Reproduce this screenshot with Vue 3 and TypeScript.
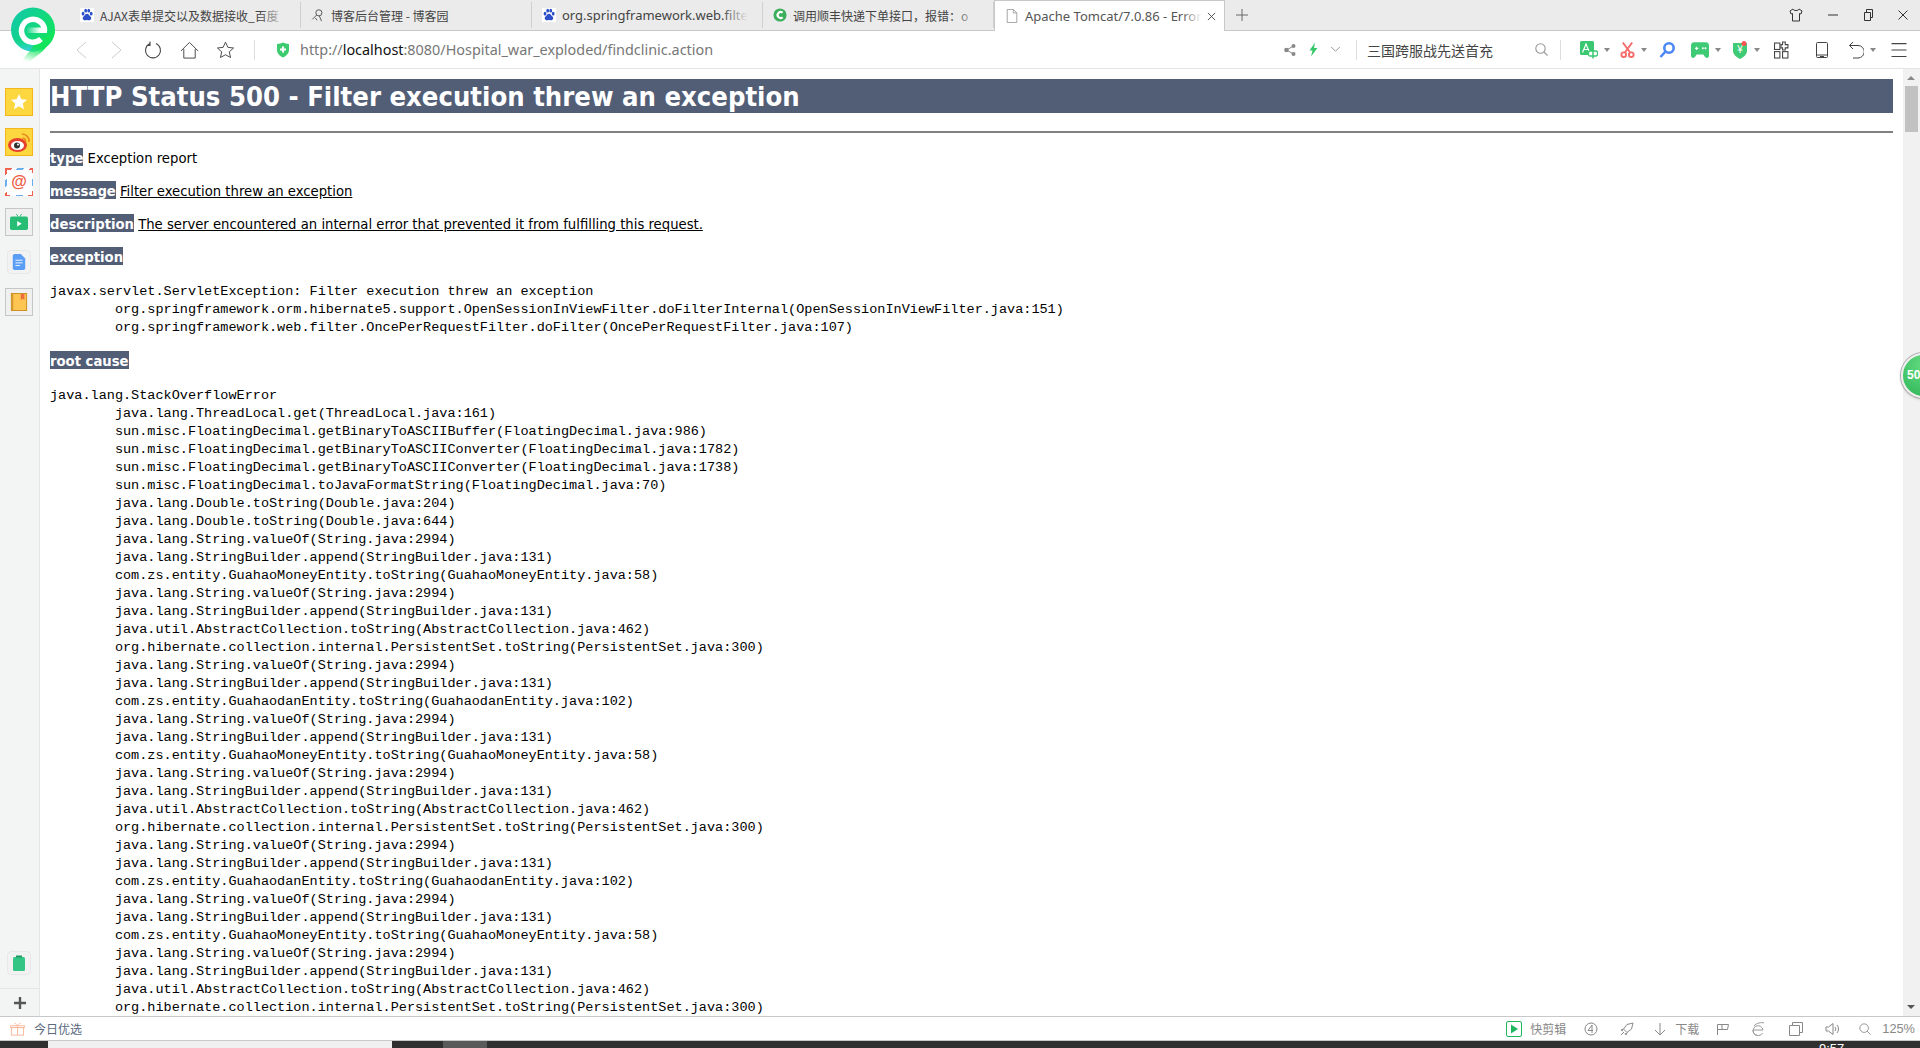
<script setup lang="ts">
const lines1: string[] = [
  'javax.servlet.ServletException: Filter execution threw an exception',
  '\torg.springframework.orm.hibernate5.support.OpenSessionInViewFilter.doFilterInternal(OpenSessionInViewFilter.java:151)',
  '\torg.springframework.web.filter.OncePerRequestFilter.doFilter(OncePerRequestFilter.java:107)',
]
const svo = '\tjava.lang.String.valueOf(String.java:2994)'
const sba = '\tjava.lang.StringBuilder.append(StringBuilder.java:131)'
const money = '\tcom.zs.entity.GuahaoMoneyEntity.toString(GuahaoMoneyEntity.java:58)'
const dan = '\tcom.zs.entity.GuahaodanEntity.toString(GuahaodanEntity.java:102)'
const abs = '\tjava.util.AbstractCollection.toString(AbstractCollection.java:462)'
const ps = '\torg.hibernate.collection.internal.PersistentSet.toString(PersistentSet.java:300)'
const lines2: string[] = [
  'java.lang.StackOverflowError',
  '\tjava.lang.ThreadLocal.get(ThreadLocal.java:161)',
  '\tsun.misc.FloatingDecimal.getBinaryToASCIIBuffer(FloatingDecimal.java:986)',
  '\tsun.misc.FloatingDecimal.getBinaryToASCIIConverter(FloatingDecimal.java:1782)',
  '\tsun.misc.FloatingDecimal.getBinaryToASCIIConverter(FloatingDecimal.java:1738)',
  '\tsun.misc.FloatingDecimal.toJavaFormatString(FloatingDecimal.java:70)',
  '\tjava.lang.Double.toString(Double.java:204)',
  '\tjava.lang.Double.toString(Double.java:644)',
  svo, sba, money, svo, sba, abs, ps, svo, sba, dan, svo, sba, money, svo, sba, abs, ps, svo, sba, dan, svo, sba, money, svo, sba, abs, ps,
]
const tabs = [
  { title: 'AJAX表单提交以及数据接收_百度', icon: 'baidu', latin: false },
  { title: '博客后台管理 - 博客园', icon: 'blog', latin: false },
  { title: 'org.springframework.web.filte', icon: 'baidu', latin: true },
  { title: '调用顺丰快递下单接口，报错：o', icon: 'c', latin: false },
]
</script>

<template>
  <div class="screen">
    <svg class="logo" viewBox="0 0 46 56">
      <defs>
        <linearGradient id="lg" x1="0.1" y1="0.1" x2="1" y2="0.7"><stop offset="0" stop-color="#12c9a6"/><stop offset="1" stop-color="#12e45c"/></linearGradient>
        <linearGradient id="lg2" x1="0" y1="0" x2="0.6" y2="1"><stop offset="0" stop-color="#24dcc8" stop-opacity="0"/><stop offset="1" stop-color="#3fc8f5"/></linearGradient>
        <linearGradient id="tail" x1="0.5" y1="0" x2="0.2" y2="1"><stop offset="0.45" stop-color="#12e45c"/><stop offset="1" stop-color="#12e45c" stop-opacity="0"/></linearGradient>
        <linearGradient id="bar" x1="0" y1="0" x2="1" y2="0"><stop offset="0.1" stop-color="#fff" stop-opacity="0"/><stop offset="0.7" stop-color="#fff"/></linearGradient>
      </defs>
      <circle cx="22" cy="22.500" r="22" fill="url(#lg)"/>
      <path d="M3 34A22 22 0 0 0 28 43.600L34 34H3z" fill="url(#lg2)"/>
      <path d="M44 24C43 33 37 38 32 44L18 55H10L23 38z" fill="url(#tail)"/>
      <path d="M33.500 24A11.500 11.500 0 1 0 30 32" fill="none" stroke="#fff" stroke-width="5.500"/>
      <rect x="13" y="20.500" width="23" height="5.500" fill="url(#bar)"/>
    </svg>
    <header class="tabbar">
      <div v-for="(t, i) in tabs" :key="i" class="tab">
        <svg v-if="t.icon === 'baidu'" class="fav" viewBox="0 0 16 16"><rect width="16" height="16" fill="#fff"/><g fill="#2d50c8"><ellipse cx="3.500" cy="6.500" rx="1.600" ry="2.200"/><ellipse cx="6.500" cy="3" rx="1.600" ry="2.200"/><ellipse cx="10" cy="3" rx="1.600" ry="2.200"/><ellipse cx="12.800" cy="6.500" rx="1.600" ry="2.200"/><path d="M8 6.500c-2 0-2.500 2-4 3.200C2.500 11 3 14 5.500 14c1 0 1.600-.4 2.500-.4s1.500.4 2.500.4c2.500 0 3-3 1.500-4.300C10.500 8.500 10 6.500 8 6.500z"/></g></svg>
        <svg v-else-if="t.icon === 'blog'" class="fav" viewBox="0 0 16 16" fill="none" stroke="#555" stroke-width="1.100"><circle cx="9" cy="5.500" r="3.500"/><path d="M6.500 8 1.500 13M9.500 9l2.500 6M5 11.500l2 2.500" /></svg>
        <svg v-else class="fav" viewBox="0 0 16 16"><circle cx="8" cy="8" r="7.500" fill="#3dae5c"/><path d="M11 5.500a3.400 3.400 0 1 0 0 5" fill="none" stroke="#fff" stroke-width="2.400"/></svg>
        <span class="tab-text" :class="{ latin: t.latin }">{{ t.title }}</span>
        <i class="tab-fade"></i>
      </div>
      <div class="tab active">
        <svg class="fav" viewBox="0 0 16 16" fill="#fff" stroke="#999"><path d="M2.500.5h7l4 4v11h-11z"/><path d="M9.500.5v4h4" fill="none"/></svg>
        <span class="tab-text latin">Apache Tomcat/7.0.86 - Error</span>
        <i class="tab-fade active-fade"></i>
        <svg class="tab-x" viewBox="0 0 10 10" stroke="#444" stroke-width="1"><path d="M1 1l8 8M9 1l-8 8"/></svg>
      </div>
      <svg class="plus" viewBox="0 0 12 12" stroke="#666"><path d="M6 0v12M0 6h12"/></svg>
      <div class="spring"></div>
      <div class="win">
        <svg viewBox="0 0 14 14" fill="none" stroke="#333" class="w14"><path d="M4 1 1 3l1 3 1.500-.5V13h7V5.500L12 6l1-3-3-2c-.5 2-5.500 2-6 0z"/></svg>
        <svg viewBox="0 0 14 14" stroke="#333" class="w14 m1"><path d="M2 7h10"/></svg>
        <svg viewBox="0 0 14 14" fill="none" stroke="#333" class="w14 m2"><path d="M3.500 4.500h6v8h-6zM5.500 4.500v-3h6v8h-2"/></svg>
        <svg viewBox="0 0 14 14" stroke="#333" class="w14 m2"><path d="M2.500 2.500l9 9M11.500 2.500l-9 9"/></svg>
      </div>
    </header>

    <nav class="toolbar">
      <svg class="i nb1" viewBox="0 0 11 18" fill="none" stroke="#ccc"><path d="M10 1 1 9l9 8"/></svg>
      <svg class="i nb2" viewBox="0 0 11 18" fill="none" stroke="#ccc"><path d="M1 1l9 8-9 8"/></svg>
      <svg class="i2 nb3" viewBox="0 0 18 18" fill="none" stroke="#444" stroke-width="1.100"><path d="M5.500 2.500a7.500 7.500 0 1 0 6 0M5.500 .5v4H2" /></svg>
      <svg class="i2 nb4" viewBox="0 0 20 18" fill="none" stroke="#444"><path d="M1 10 10 1l9 9M4 8v9.500h12V8"/></svg>
      <svg class="i2 nb5" viewBox="0 0 20 18" fill="none" stroke="#444"><path d="m10 .8 2.500 5.400 6 .7-4.500 4 1.300 6L10 14l-5.300 2.900 1.300-6-4.500-4 6-.7z"/></svg>
      <i class="sep sep1"></i>
      <svg class="shield" viewBox="0 0 14 16"><path d="M1 2c2.500 0 4-1 6-1.500C9 1 10.500 2 13 2v6c0 3.500-3 6-6 7.500C4 14 1 11.500 1 8z" fill="#3ecb6f"/><path d="M7 4.500v6M4 7.500h6" stroke="#fff" stroke-width="2"/></svg>
      <div class="url"><span>http://</span><b>localhost</b><span>:8080/Hospital_war_exploded/findclinic.action</span></div>
      <div class="spring"></div>
      <svg class="share" viewBox="0 0 12 12" fill="#888"><circle cx="2.500" cy="6" r="2.300"/><circle cx="9.500" cy="2" r="2"/><circle cx="9.500" cy="10" r="2"/><path d="M2.500 6l7-4M2.500 6l7 4" stroke="#888"/></svg>
      <svg class="bolt" viewBox="0 0 9 14"><path d="M6 0 .5 8h3L2 14l6.500-8.500H5z" fill="#35c76a"/></svg>
      <svg class="chev" viewBox="0 0 12 8" fill="none" stroke="#888"><path d="M1 1l5 5 5-5"/></svg>
      <i class="sep sep2"></i>
      <span class="search-text">三国跨服战先送首充</span>
      <svg class="mag" viewBox="0 0 13 13" fill="none" stroke="#999" stroke-width="1.100"><circle cx="5.500" cy="5.500" r="4.700"/><path d="M9 9l3.500 3.500"/></svg>
      <i class="sep sep3"></i>
      <svg class="t16 t-a" viewBox="0 0 18 18"><rect width="14" height="14" rx="1.500" fill="#39c871"/><path d="M2.500 11.500 6 3l3.500 8.500M3.800 8.500h4.400" stroke="#fff" fill="none" stroke-width="1.200"/><rect x="8.500" y="10" width="9" height="5" rx="1.500" fill="#fff" stroke="#39c871" stroke-width="1.300"/><path d="M13 7.500v10" stroke="#39c871" stroke-width="1.500"/></svg>
      <i class="caret c-a"></i>
      <svg class="t16 t-b" viewBox="0 0 16 18" fill="none" stroke="#f66b6b" stroke-width="2"><path d="M3 1l8 11M13 1 5 12"/><circle cx="4" cy="14" r="2.500"/><circle cx="12" cy="14" r="2.500"/></svg>
      <i class="caret c-b"></i>
      <svg class="t16 t-c" viewBox="0 0 16 18" fill="none" stroke="#4b87f7" stroke-width="2.600"><circle cx="10" cy="7" r="4.700"/><path d="M6.500 10.500 1.500 16"/></svg>
      <svg class="t16 t-d" viewBox="0 0 16 16"><path d="M3 1h10a3 3 0 0 1 3 3v9a2 2 0 0 1-3.500 1.300L11 12H5l-1.500 2.300A2 2 0 0 1 0 13V4a3 3 0 0 1 3-3z" fill="#3fca75"/><path d="M3.500 6.500h3M5 5v3" stroke="#fff"/><circle cx="10.500" cy="6.500" r=".9" fill="#fff"/><circle cx="12.800" cy="6.500" r=".9" fill="#fff"/></svg>
      <i class="caret c-d"></i>
      <svg class="t16 t-e" viewBox="0 0 16 18"><path d="M1 2h14v8c0 3-3 6-7 8-4-2-7-5-7-8z" fill="#3fca75"/><text x="8" y="12" class="yen">¥</text><circle cx="12" cy="2.500" r="2.500" fill="#f55"/></svg>
      <i class="caret c-e"></i>
      <svg class="t16 t-f" viewBox="0 0 14 16" fill="none" stroke="#444"><rect x=".5" y="1.500" width="5" height="6"/><path d="M10.500 .5v2.500H13v3h-2.500v2h-2.500V6H6.500V3H8V.5z"/><rect x=".5" y="9.500" width="5" height="6"/><rect x="8" y="9.500" width="5" height="6"/></svg>
      <svg class="t16 t-g" viewBox="0 0 12 16" fill="none" stroke="#444"><rect x=".5" y=".5" width="11" height="15" rx="1"/><path d="M.5 13h11M4 14.500h4" /></svg>
      <svg class="t16 t-h" viewBox="0 0 16 18" fill="none" stroke="#444"><path d="M5 1 1.500 4.500 5 8M1.500 4.500H10a5 5 0 0 1 0 12.500H5"/></svg>
      <i class="caret c-h"></i>
      <svg class="t16 t-i" viewBox="0 0 14 14" stroke="#444"><path d="M0 1.500h14M0 7.500h14M0 13.500h14"/></svg>
    </nav>

    <div class="main">
      <aside class="side">
        <div class="s-top">
          <div class="sq yellow"><svg viewBox="0 0 18 18"><path d="m9 1 2.400 5.200 5.600.6-4.200 3.800 1.200 5.600L9 13.300 4 16.200l1.200-5.600L1 6.800l5.600-.6z" fill="#fff"/></svg></div>
          <div class="sq yellow"><svg class="wb" viewBox="0 0 24 22"><ellipse cx="10.500" cy="14" rx="9.500" ry="7" fill="#e6402e"/><ellipse cx="10.500" cy="14.500" rx="6.500" ry="4.500" fill="#fff"/><circle cx="10" cy="14.500" r="3" fill="#333"/><circle cx="11" cy="13.500" r="1" fill="#fff"/><path d="M15 3a7 7 0 0 1 7 8M15.500 7a3 3 0 0 1 3 4" fill="none" stroke="#e98a1f" stroke-width="1.600"/></svg></div>
          <div class="sq mail"><span>@</span></div>
          <div class="sq grey"><svg viewBox="0 0 20 18"><rect y="3" width="20" height="15" rx="2" fill="#28bd75"/><path d="M8 8l5 3-5 3z" fill="#fff"/><path d="M7 0l2 3M13 0l-2 3" stroke="#28bd75"/></svg></div>
          <div class="sq plain"><svg viewBox="0 0 14 18"><path d="M2 0h7l5 5v11a2 2 0 0 1-2 2H2a2 2 0 0 1-2-2V2a2 2 0 0 1 2-2z" fill="#5a9df5"/><path d="M3 7h8M3 10h8M3 13h5" stroke="#fff"/></svg></div>
          <div class="sq grey"><svg viewBox="0 0 18 20"><rect x=".5" y=".5" width="17" height="19" fill="#fdc552" stroke="#c98a1c"/><path d="M11 1h4v7l-2-2-2 2z" fill="#ef6b3e"/><path d="M2 1v18" stroke="#c98a1c"/></svg></div>
        </div>
        <div class="s-bottom">
          <div class="sq plain"><svg viewBox="0 0 12 16"><rect y="2" width="12" height="14" rx="1.500" fill="#32c583"/><rect x="3" y=".5" width="6" height="2" fill="#1c9a62"/></svg></div>
          <div class="s-add"><svg viewBox="0 0 12 12"><path d="M6 0v12M0 6h12" stroke="#555" stroke-width="2.400"/></svg></div>
        </div>
      </aside>

      <main class="page">
        <h1>HTTP Status 500 - Filter execution threw an exception</h1>
        <div class="line"></div>
        <p><b>type</b> Exception report</p>
        <p><b>message</b> <u>Filter execution threw an exception</u></p>
        <p><b>description</b> <u>The server encountered an internal error that prevented it from fulfilling this request.</u></p>
        <p><b>exception</b></p>
        <pre>{{ lines1.join('\n') }}</pre>
        <p><b>root cause</b></p>
        <pre>{{ lines2.join('\n') }}</pre>
      </main>

      <div class="scroll">
        <i class="up"></i>
        <div class="thumb"></div>
        <i class="down"></i>
      </div>
      <div class="ball"><span>50</span></div>
    </div>

    <footer class="status">
      <svg class="gift" viewBox="0 0 16 14" fill="none" stroke="#f7b79a"><rect x="1.500" y="5.500" width="13" height="8"/><path d="M.5 3.500h15v2H.5zM8 3.500v10M8 3.500 5 .5M8 3.500l3-3"/></svg>
      <span class="today">今日优选</span>
      <div class="spring"></div>
      <svg class="kj" viewBox="0 0 16 16"><rect x=".5" y=".5" width="15" height="15" rx="1.500" fill="#fff" stroke="#1fb85f"/><path d="M5 3.500 12 8l-7 4.500z" fill="#1fb85f"/></svg>
      <span class="stxt kj-t">快剪辑</span>
      <svg class="st st1" viewBox="0 0 14 14" fill="none" stroke="#888"><circle cx="7" cy="7" r="6"/><path d="M8 3 4 8.500h5M8 3v8"/></svg>
      <svg class="st st2" viewBox="0 0 14 14" fill="none" stroke="#888"><path d="M13 1 7 2.500 3.500 7l3.500 3.500L11.500 7zM3.500 7 1 8l2 1M7 10.500 6 13l-1-2M4 10l-3 3"/></svg>
      <svg class="st st3" viewBox="0 0 14 14" fill="none" stroke="#888"><path d="M7 1v12M2 8l5 5 5-5"/></svg>
      <span class="stxt dl">下载</span>
      <svg class="st st4" viewBox="0 0 14 14" fill="none" stroke="#888"><path d="M1.500 13V2.500h11l-1 5H1.500M6 2.500v5"/></svg>
      <svg class="st st5" viewBox="0 0 14 14" fill="none" stroke="#999"><path d="M2 8h10a5 5 0 1 0-.5 3M2 8c0 3 1.500 5 4 5M3 4c2-3 8-4 10-3"/></svg>
      <svg class="st st6" viewBox="0 0 14 14" fill="none" stroke="#888"><path d="M.5 3.500h10v10H.5zM3.500 3.500V.5h10v10h-3"/></svg>
      <svg class="st st7" viewBox="0 0 14 14" fill="none" stroke="#888"><path d="M1 5h2.500L8 1.500v11L3.500 9H1zM10 5a3 3 0 0 1 0 4M12 3a6 6 0 0 1 0 8"/></svg>
      <svg class="st st8" viewBox="0 0 14 14" fill="none" stroke="#888"><circle cx="6" cy="6" r="5"/><path d="M9.500 9.500l4 4"/></svg>
      <span class="stxt zoom">125%</span>
    </footer>
    <div class="taskbar"><i class="t1"></i><i class="t3"></i><span class="clock">9:57</span></div>
  </div>
</template>

<style>
html, body { margin: 0; padding: 0; background: #fff; overflow: hidden; }
</style>

<style scoped>
.screen { width: 1920px; height: 1048px; display: flex; flex-direction: column; overflow: hidden; position: relative; font-family: "Noto Sans CJK SC", "Liberation Sans", sans-serif; background: #fff; }
.spring { flex: 1; }
svg { display: block; flex: none; }
.logo { position: absolute; left: 11px; top: 7px; width: 46px; height: 56px; z-index: 3; }

.tabbar { height: 31px; box-sizing: border-box; background: #ebebeb; border-bottom: 1px solid #c8c8c8; display: flex; align-items: stretch; flex: none; padding-left: 70px; }
.tab { width: 231px; height: 26px; margin-top: 2px; box-sizing: border-box; padding-left: 10px; display: flex; align-items: center; gap: 6px; border-right: 1px solid #d0d0d0; position: relative; overflow: hidden; font-size: 12px; color: #444; }
.fav { width: 14px; height: 14px; }
.tab-text { white-space: nowrap; }
.latin { font-family: "Noto Sans", "Liberation Sans", sans-serif; font-size: 13px; }
.tab-fade { position: absolute; right: 0; top: 0; bottom: 0; width: 40px; background: linear-gradient(to right, rgba(235,235,235,0), #ebebeb 65%); }
.tab.active { margin-top: 0; background: #fff; border: 1px solid #c8c8c8; border-bottom: none; padding-left: 10px; margin-bottom: -1px; height: 31px; }
.tab.active .tab-text { color: #555; }
.tab .active-fade { right: 22px; background: linear-gradient(to right, rgba(255,255,255,0), #fff); width: 20px; }
.tab-x { width: 9px; height: 9px; position: absolute; right: 8px; top: 11px; }
.plus { width: 12px; height: 12px; margin: 9px 0 0 11px; }
.win { display: flex; margin: 8px 10px 0 0; height: 14px; }
.w14 { width: 14px; height: 14px; }
.m1 { margin-left: 23px; }
.m2 { margin-left: 21px; }

.toolbar { height: 38px; box-sizing: border-box; border-bottom: 1px solid #e4e4e4; display: flex; align-items: center; flex: none; padding-right: 13px; background: #fff; }
.i { width: 11px; height: 18px; }
.i2 { width: 19px; height: 18px; }
.nb1 { margin-left: 76px; }
.nb2 { margin-left: 24px; }
.nb3 { margin-left: 22px; }
.nb4 { margin-left: 17px; }
.nb5 { margin-left: 17px; }
.sep { width: 1px; height: 20px; background: #ddd; display: block; flex: none; }
.sep1 { margin-left: 19px; }
.shield { width: 14px; height: 16px; margin-left: 21px; }
.url { margin-left: 10px; font-size: 14.400px; color: #777; white-space: nowrap; font-family: "Noto Sans", "Liberation Sans", sans-serif; }
.url b { font-weight: 400; color: #111; }
.share { width: 12px; height: 12px; }
.bolt { width: 9px; height: 15px; margin-left: 13px; }
.chev { width: 11px; height: 7px; margin-left: 12px; }
.sep2 { margin-left: 15px; }
.search-text { margin-left: 10px; font-size: 14px; color: #444; white-space: nowrap; }
.mag { width: 13px; height: 13px; margin-left: 42px; }
.sep3 { margin-left: 12px; }
.t16 { height: 18px; width: 18px; }
.t-a { margin-left: 19px; }
.caret { width: 0; height: 0; border-left: 3px solid transparent; border-right: 3px solid transparent; border-top: 4px solid #888; display: block; flex: none; margin-left: 6px; }
.t-b { margin-left: 10px; width: 15px; }
.t-c { margin-left: 11px; }
.t-d { margin-left: 15px; }
.t-e { margin-left: 10px; }
.c-e { margin-left: 5px; }
.t-f { margin-left: 14px; width: 15px; }
.t-g { margin-left: 27px; width: 12px; }
.t-h { margin-left: 20px; width: 16px; }
.t-i { margin-left: 15px; width: 16px; height: 15px; }
.yen { font-size: 10px; fill: #fff; text-anchor: middle; font-family: "Liberation Sans", sans-serif; }

.main { flex: 1; min-height: 0; display: flex; position: relative; }
.side { width: 40px; flex: none; box-sizing: border-box; background: #f3f5f5; border-right: 1px solid #e6e6e6; display: flex; flex-direction: column; justify-content: space-between; }
.s-top { padding: 19px 0 0 5px; display: flex; flex-direction: column; gap: 12px; }
.sq { width: 28px; height: 28px; box-sizing: border-box; display: flex; align-items: center; justify-content: center; }
.sq svg { width: 18px; height: 18px; }
.sq .wb { width: 24px; height: 22px; }
.yellow { background: #fdd73f; border: 1px solid #f4b618; }
.grey { background: #f0f0f0; border: 1px solid #c6c6c6; }
.plain { background: #f2f2f2; border: 1px solid #e8e8e8; border-radius: 4px; margin-left: 2px; width: 24px; height: 24px; margin-top: 2px; margin-bottom: 2px; }
.plain svg { width: 14px; height: 16px; }
.mail { background: repeating-linear-gradient(135deg, #f0624f 0 5px, #fff 5px 9px, #6aaef0 9px 14px, #fff 14px 18px); position: relative; }
.mail span { background: #fff; width: 25px; height: 25px; display: flex; align-items: center; justify-content: center; color: #ef5a46; font: 700 16px "Liberation Sans", sans-serif; }
.s-bottom { padding-left: 5px; }
.s-bottom .plain { margin: 0 0 13px 2px; }
.s-add { border-top: 1px solid #e6e6e6; margin-left: -5px; height: 27px; display: flex; align-items: center; justify-content: center; }
.s-add svg { width: 12px; height: 12px; margin-top: 1px; }

.page { flex: 1; min-width: 0; overflow: hidden; padding: 10px 10px 0 10px; color: #000; font-family: "DejaVu Sans", "Liberation Sans", sans-serif; font-stretch: condensed; font-size: 14.700px; line-height: 18px; }
h1 { margin: 0; background: #525d76; color: #fff; font-size: 27.200px; height: 34px; line-height: 36px; font-weight: 700; white-space: nowrap; }
.line { height: 2px; background: #808080; margin: 18px 0 15px; }
p { margin: 0 0 15px; line-height: 20px; height: 18px; white-space: nowrap; }
p b { background: #525d76; color: #fff; display: inline-block; line-height: 20px; height: 18px; }
pre { margin: 0 0 14px; padding-top: 3px; font-family: "Liberation Mono", monospace; font-size: 13.530px; line-height: 18px; tab-size: 8; white-space: pre; }

.scroll { width: 17px; flex: none; background: #f1f1f1; position: relative; }
.thumb { position: absolute; top: 17px; left: 2px; width: 13px; height: 46px; background: #c1c1c1; }
.up, .down { position: absolute; left: 4px; width: 0; height: 0; border-left: 4px solid transparent; border-right: 4px solid transparent; }
.up { top: 7px; border-bottom: 4px solid #888; }
.down { bottom: 7px; border-top: 4px solid #555; }
.ball { position: absolute; left: 1901px; top: 284px; width: 45px; height: 45px; box-sizing: border-box; border-radius: 50%; background: radial-gradient(circle at 50% 25%, #62da80, #2fb558); border: 2px solid #eee; box-shadow: 0 0 0 1px #aaa, 0 1px 3px rgba(0,0,0,.3); color: #fff; font: 700 12px/41px "Liberation Sans", sans-serif; padding-left: 4px; }

.status { box-sizing: border-box; flex: none; border-top: 1px solid #c8c8c8; height: 24px; display: flex; align-items: center; padding-right: 5px; background: #fff; }
.gift { width: 15px; height: 14px; margin-left: 10px; }
.today { margin-left: 9px; font-size: 12px; color: #5a6a80; }
.stxt { font-size: 12px; color: #888; }
.st { width: 14px; height: 14px; }
.kj { width: 16px; height: 16px; }
.kj-t { margin-left: 8px; }
.st1 { margin-left: 18px; }
.st2 { margin-left: 22px; }
.st3 { margin-left: 19px; }
.dl { margin-left: 8px; }
.st4 { margin-left: 17px; }
.st5 { margin-left: 21px; }
.st6 { margin-left: 24px; }
.st7 { margin-left: 22px; }
.st8 { margin-left: 20px; width: 12px; height: 12px; }
.zoom { margin-left: 11px; font-family: "Liberation Sans", sans-serif; font-size: 12.800px; }

.taskbar { height: 8px; flex: none; background: #303030; border-top: 1px solid #c8c8c8; position: relative; overflow: hidden; box-sizing: border-box; }
.taskbar i { position: absolute; top: 0; bottom: 0; }
.t1 { left: 48px; width: 344px; background: #f0f0f0; }
.t3 { left: 443px; width: 44px; background: #5a5a5a; }
.clock { position: absolute; left: 1819px; top: 1px; font-size: 13px; line-height: 14px; color: #fff; font-family: "Liberation Sans", sans-serif; }
</style>
